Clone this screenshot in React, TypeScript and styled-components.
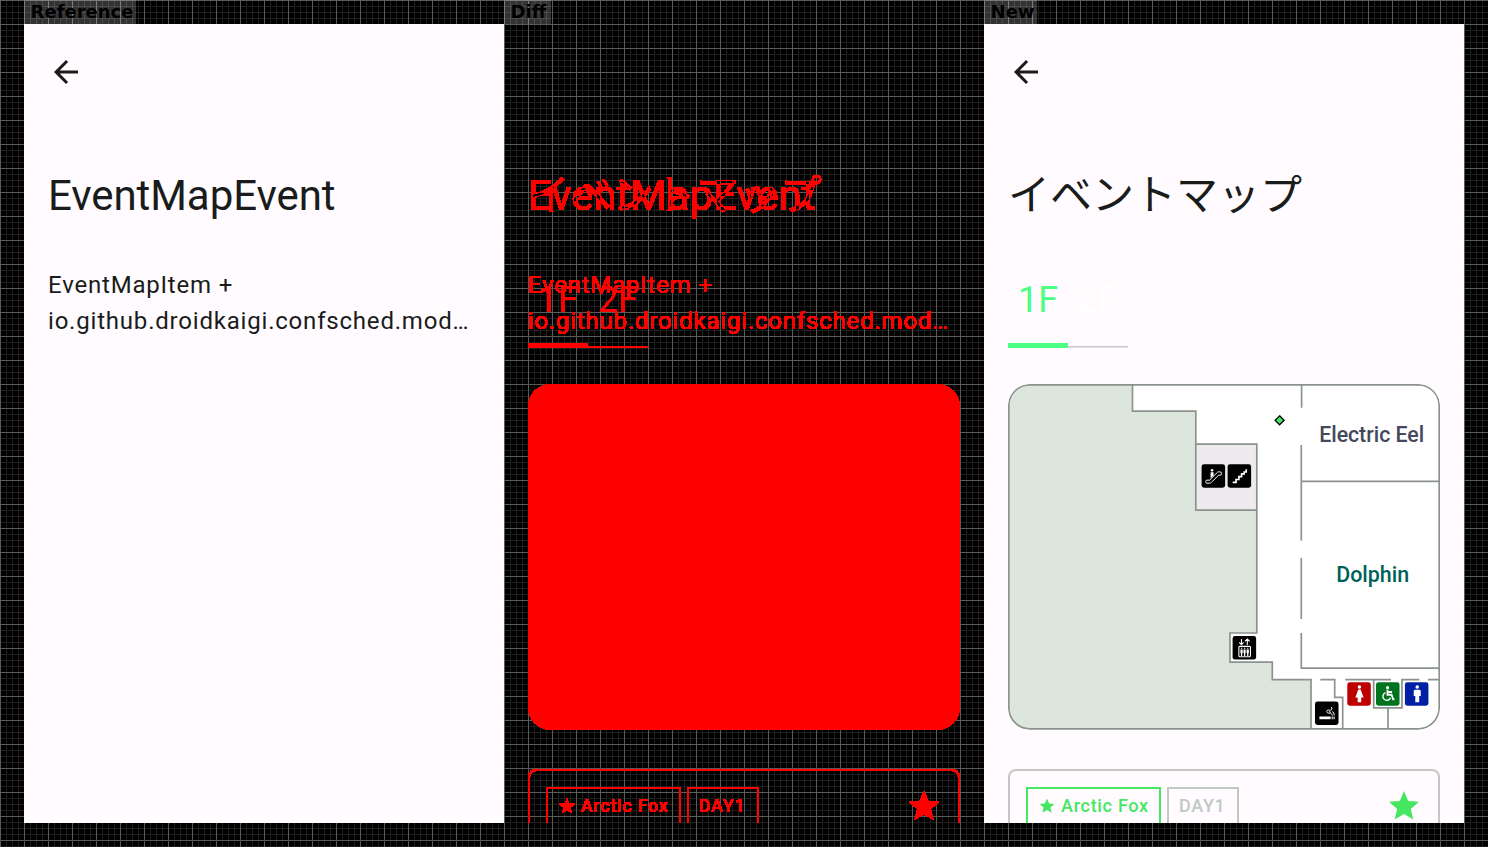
import React from 'react';
import styled, { createGlobalStyle, css } from 'styled-components';

const GlobalStyle = createGlobalStyle`
  * { box-sizing: border-box; }
  body { margin: 0; background: #000; }
`;

const GREEN = '#45e761';
const WALL = '#8b938c';

/* ---------- comparison board ---------- */

const Board = styled.main`
  width: 1488px;
  height: 847px;
  overflow: hidden;
  display: grid;
  grid-template-columns: repeat(3, 480px);
  grid-template-rows: 24px 799px;
  padding: 0 24px;
  background-color: #000;
  background-image:
    linear-gradient(#595b59 1px, transparent 1px),
    linear-gradient(90deg, #595b59 1px, transparent 1px),
    linear-gradient(#1e1e1e 1px, transparent 1px),
    linear-gradient(90deg, #1e1e1e 1px, transparent 1px);
  background-size: 24px 24px, 24px 24px, 6px 6px, 6px 6px;
`;

const Caption = styled.h2<{ $width: number }>`
  margin: 0;
  width: ${(p) => p.$width}px;
  height: 24px;
  padding-left: 6.6px;
  background: rgba(255, 255, 255, 0.2);
  color: #000;
  font: bold 18px/23px 'DejaVu Sans', sans-serif;
  white-space: nowrap;
`;

const DiffLayer = styled.div`
  display: grid;
  height: 799px;
  isolation: isolate;
  filter: url(#changed-pixels);
  > * { grid-area: 1 / 1; }
  > * + * { mix-blend-mode: difference; }
`;

const FilterDefs = styled.svg`
  position: absolute;
`;

/* ---------- phone screens ---------- */

const Screen = styled.section`
  width: 480px;
  height: 799px;
  overflow: hidden;
  padding: 30px 24px 0;
  background: #fffbff;
  color: #191c1a;
  font-family: Roboto, 'Noto Sans CJK JP', sans-serif;
`;

const BackIcon = styled.svg`
  display: block;
  width: 36px;
  height: 36px;
  fill: currentColor;
`;

const Title = styled.h1<{ $japanese?: boolean }>`
  margin: 79px 0 0;
  height: 54px;
  font-size: 42px;
  line-height: 54px;
  font-weight: 400;
  letter-spacing: -0.07px;
  white-space: nowrap;
  ${(p) =>
    p.$japanese &&
    css`
      margin-top: 75px;
      letter-spacing: 0;
      font-family: 'Noto Sans CJK JP', sans-serif;
    `}
`;

const Description = styled.p`
  margin: 44px 0 0;
  font-size: 24px;
  line-height: 36px;
  letter-spacing: 0.8px;
  white-space: nowrap;
`;

const Tabs = styled.nav`
  display: flex;
  margin-top: 33px;
  height: 120px;
  height: 96px;
`;

const Tab = styled.div<{ $active?: boolean }>`
  display: flex;
  align-items: center;
  justify-content: center;
  width: 60px;
  height: 96px;
  font-size: 36px;
  line-height: 48px;
  color: ${(p) => (p.$active ? '#4aff82' : '#ffffff')};
  box-shadow: ${(p) => (p.$active ? 'inset 0 -5px #4aff82' : 'inset 0 -1px #e3dfe8, inset 0 -2px #cac4d0')};
`;

const MapCard = styled.div`
  margin-top: 36px;
  height: 346px;
  border-radius: 22px;
  background: #fff;
  overflow: hidden;
`;

const MapDrawing = styled.svg`
  display: block;
  width: 432px;
  height: 346px;
  font-family: Roboto, sans-serif;
  font-weight: 500;
  font-size: 21.5px;
`;

const EventCard = styled.article`
  display: flex;
  justify-content: space-between;
  align-items: flex-start;
  margin-top: 39px;
  height: 120px;
  padding: 16px 16px 0;
  border: 2px solid #c4c7c6;
  border-radius: 8px;
`;

const ChipRow = styled.div`
  display: flex;
  gap: 6px;
`;

const Chip = styled.span<{ $width: number; $tone: string }>`
  display: flex;
  align-items: center;
  gap: 5px;
  width: ${(p) => p.$width}px;
  height: 39px;
  padding: 0 0 2px 10px;
  border: 2px solid ${(p) => p.$tone};
  color: ${(p) => p.$tone};
  font-size: 18px;
  font-weight: 500;
  letter-spacing: 0.7px;
  white-space: nowrap;
`;

const StarSvg = styled.svg<{ $size: number }>`
  display: block;
  flex: none;
  width: ${(p) => p.$size}px;
  height: ${(p) => p.$size}px;
  fill: ${GREEN};
`;

const FavoriteSlot = styled.div`
  padding-top: 1px;
`;

const Star = ({ size }: { size: number }) => (
  <StarSvg $size={size} viewBox="0 0 24 24">
    <path d="M12 17.27 18.18 21l-1.64-7.03L22 9.24l-7.19-.61L12 2 9.19 8.63 2 9.24l5.46 4.73L5.82 21z" />
  </StarSvg>
);

const Back = () => (
  <BackIcon viewBox="0 0 24 24">
    <path d="M20 11H7.83l5.59-5.59L12 4l-8 8 8 8 1.41-1.41L7.83 13H20z" />
  </BackIcon>
);

/* A square pictogram tile; children are drawn on a 24 unit grid. */
const Tile = ({ x, y, fill = '#000', children }: { x: number; y: number; fill?: string; children: React.ReactNode }) => (
  <g transform={`translate(${x} ${y}) scale(0.98)`}>
    <rect width="24" height="24" rx="2.5" fill={fill} />
    {children}
  </g>
);

const FloorMap = () => (
  <MapDrawing viewBox="1008 384 432 346">
    <path
      d="M1009 385H1132.3V411.2H1196V510.2H1256.8V633H1230V662.2H1272.3V679.7H1311V729H1009Z"
      fill="#dde6dd"
    />
    <path d="M1196 444.2H1256.8V510.2H1196Z" fill="#efeaee" />
    <g fill="none" stroke={WALL} strokeWidth="1.7">
      <path d="M1132.5 385V411.2H1195.8V510.2H1256.8M1195.8 444.2H1256.8V633H1230V662.2H1272.3V679.7H1311V729" />
      <path d="M1301.6 385V407.7M1301.3 445V540.7M1301.3 481.4H1439M1301.3 558V619M1301.3 633V668.1H1439" />
      <path d="M1320.3 679.7H1334.7V697.3H1342.7V729M1345.3 679.7H1391M1373.7 679.7V707.8H1402V679.7H1419.3M1428 679.7H1439M1388 707.8V729" />
      <rect x="1008.8" y="384.8" width="430.4" height="344" rx="21" />
    </g>
    <path d="M1279.6 415.8 1284.1 420.3 1279.6 424.8 1275.1 420.3Z" fill={GREEN} stroke="#000" strokeWidth="1.3" />
    <text x="1319.2" y="442" fill="#45485b" textLength="105" lengthAdjust="spacingAndGlyphs">Electric Eel</text>
    <text x="1336.2" y="582" fill="#00605a" textLength="73" lengthAdjust="spacingAndGlyphs">Dolphin</text>

    <Tile x={1201.6} y={464.2}>
      <path d="M5.3 16.3h2.9l6.4-6.6c.8-.9 1.5-1.9 2.8-1.9h1.2a1.6 1.6 0 0 1 0 3.5h-1.4l-6.4 6.5c-.8.9-1.6 1.6-2.8 1.6H5.3a1.6 1.6 0 0 1 0-3.1z" fill="none" stroke="#fff" strokeWidth="1" />
      <path d="M9.2 8.1h3v3.2l-3 3.2z" fill="#fff" />
      <circle cx="10.7" cy="6.1" r="1.3" fill="#fff" />
    </Tile>
    <Tile x={1227.6} y={464.2}>
      <path d="M5.2 18.5h3.4v-2.9h2.9v-2.9h2.8V9.8h2.6V8h2.1V5.2" fill="none" stroke="#fff" strokeWidth="1.7" />
    </Tile>
    <Tile x={1232.6} y={636.1}>
      <g fill="none" stroke="#fff" strokeWidth="1.1">
        <path d="M9 3v5.7M6.8 6.4 9 8.8l2.2-2.4M15 9V3.3M12.6 5.4 15 3l2.4 2.4" />
        <rect x="6.4" y="10.5" width="11.8" height="10.6" rx="1" />
      </g>
      <path d="M8 13.6h2.3v4H9.8v2.6H8.5v-2.6H8zM11.1 13.6h2.3v4h-.5v2.6h-1.3v-2.6h-.5zM14.3 13.6h2.3v4h-.5v2.6h-1.3v-2.6h-.5z" fill="#fff" />
      <path d="M8.5 12h1.3v1H8.5zM11.6 12h1.3v1h-1.3zM14.8 12h1.3v1h-1.3z" fill="#fff" />
    </Tile>
    <Tile x={1315} y={701.5}>
      <path d="M4.5 15.2H16V18H4.5zM17 15.2h1.1V18H17zM18.9 15.2H20V18h-1.1z" fill="#fff" />
      <path d="M17.6 14.3c0-2-1.2-2.4-3.2-2.4-3 0-3.1-3.1-.8-3.2 1 0 1.4.4 2.4.2 1.4-.3 1.5-2 .7-3.3M19.5 14.3c0-2-.4-3.4-2-4M15 9.8c-.7.8 0 1.2 1.2 1.2" fill="none" stroke="#fff" strokeWidth="1" />
    </Tile>
    <Tile x={1347.3} y={682.2} fill="#bd0000">
      <circle cx="12.4" cy="5" r="1.8" fill="#fff" />
      <path d="M11.2 7.5h2.4l3 8h-2.4v5h-3.6v-5H8.2z" fill="#fff" />
    </Tile>
    <Tile x={1376} y={682.2} fill="#00731d">
      <circle cx="11.8" cy="5.6" r="1.6" fill="#fff" />
      <path d="M11.7 7.8v5h4.2l1.6 4.7h1.4M12 10h4.4" fill="none" stroke="#fff" strokeWidth="1.8" />
      <path d="M9.8 10.7a4 4 0 1 0 5 5.2" fill="none" stroke="#fff" strokeWidth="1.4" />
    </Tile>
    <Tile x={1404.9} y={682.2} fill="#001fa5">
      <circle cx="12.6" cy="5" r="1.8" fill="#fff" />
      <path d="M10 7.6h5.2l1 1v5.6h-1.6v6.3h-4v-6.3H9V8.6z" fill="#fff" />
    </Tile>
  </MapDrawing>
);

const BaselineScreen = () => (
  <Screen>
    <Back />
    <Title>EventMapEvent</Title>
    <Description>
      EventMapItem +<br />
      io.github.droidkaigi.confsched.mod…
    </Description>
  </Screen>
);

const UpdatedScreen = ({ outlineOnly = false }: { outlineOnly?: boolean }) => (
  <Screen>
    <Back />
    <Title $japanese>イベントマップ</Title>
    <Tabs>
      <Tab $active>1F</Tab>
      <Tab>2F</Tab>
    </Tabs>
    <MapCard>{!outlineOnly && <FloorMap />}</MapCard>
    <EventCard>
      <ChipRow>
        <Chip $width={135} $tone={GREEN}>
          <Star size={18} />
          Arctic Fox
        </Chip>
        <Chip $width={72} $tone="#bfc9c4">DAY1</Chip>
      </ChipRow>
      <FavoriteSlot>
        <Star size={36} />
      </FavoriteSlot>
    </EventCard>
  </Screen>
);

export default function App() {
  return (
    <>
      <GlobalStyle />
      <FilterDefs width="0" height="0">
        {/* Turns every non-black pixel into solid red and drops the rest. */}
        <filter id="changed-pixels" x="0" y="0" width="100%" height="100%" colorInterpolationFilters="sRGB">
          <feColorMatrix values="0 0 0 0 1  0 0 0 0 0  0 0 0 0 0  200 200 200 0 -0.6" />
        </filter>
      </FilterDefs>
      <Board>
        <Caption $width={112}>Reference</Caption>
        <Caption $width={47}>Diff</Caption>
        <Caption $width={53}>New</Caption>
        <BaselineScreen />
        <DiffLayer>
          <BaselineScreen />
          <UpdatedScreen outlineOnly />
        </DiffLayer>
        <UpdatedScreen />
      </Board>
    </>
  );
}
